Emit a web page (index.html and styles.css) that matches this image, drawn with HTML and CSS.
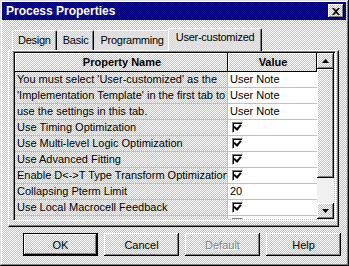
FILE: index.html
```html
<!DOCTYPE html>
<html>
<head>
<meta charset="utf-8">
<link rel="stylesheet" href="styles.css">
</head>
<body>
<div class="window">
  <div class="titlebar">
    <span class="title">Process Properties</span>
    <div class="close bevel"><svg width="8" height="7" viewBox="0 0 8 7"><path d="M0 0h2l2 2 2-2h2L5 3.5 8 7H6L4 5 2 7H0l3-3.5z" fill="#000"/></svg></div>
  </div>
  <div class="tabs">
    <div class="tab">Design</div>
    <div class="tab">Basic</div>
    <div class="tab">Programming</div>
    <div class="tab active">User-customized</div>
  </div>
  <div class="panel">
    <div class="grid">
      <div class="table">
        <div class="row head"><div class="c1">Property Name</div><div class="c2">Value</div></div>
        <div class="row"><div class="c1">You must select 'User-customized' as the</div><div class="c2">User Note</div></div>
        <div class="row"><div class="c1">'Implementation Template' in the first tab to</div><div class="c2">User Note</div></div>
        <div class="row"><div class="c1">use the settings in this tab.</div><div class="c2">User Note</div></div>
        <div class="row"><div class="c1">Use Timing Optimization</div><div class="c2"><span class="chk"></span></div></div>
        <div class="row"><div class="c1">Use Multi-level Logic Optimization</div><div class="c2"><span class="chk"></span></div></div>
        <div class="row"><div class="c1">Use Advanced Fitting</div><div class="c2"><span class="chk"></span></div></div>
        <div class="row"><div class="c1">Enable D&lt;-&gt;T Type Transform Optimization</div><div class="c2"><span class="chk"></span></div></div>
        <div class="row"><div class="c1">Collapsing Pterm Limit</div><div class="c2">20</div></div>
        <div class="row"><div class="c1">Use Local Macrocell Feedback</div><div class="c2"><span class="chk"></span></div></div>
        <div class="row"><div class="c1">Use Local Pin Feedback</div><div class="c2"><span class="chk"></span></div></div>
      </div>
      <div class="scrollbar">
        <div class="sbtn bevel"><svg width="7" height="4" viewBox="0 0 7 4"><path d="M3.5 0L7 4H0z" fill="#000"/></svg></div>
        <div class="thumb bevel"></div>
        <div class="track"></div>
        <div class="sbtn bevel"><svg width="7" height="4" viewBox="0 0 7 4"><path d="M0 0h7L3.5 4z" fill="#000"/></svg></div>
      </div>
    </div>
  </div>
  <div class="buttons">
    <div class="btn default">OK</div>
    <div class="btn bevel">Cancel</div>
    <div class="btn bevel disabled">Default</div>
    <div class="btn bevel">Help</div>
  </div>
</div>
</body>
</html>
```

FILE: styles.css
```css
html, body {
  margin: 0;
  padding: 0;
}
body {
  width: 349px;
  height: 266px;
  overflow: hidden;
  font-family: "Liberation Sans", Arial, sans-serif;
  font-size: 11px;
  color: #000;
}
body, .tab, .thumb, .bevel, .btn, .c1 {
  background: repeating-conic-gradient(#c0c0c0 0 25%, #ffffff 0 50%) 0 0 / 2px 2px fixed;
}
.window {
  width: 349px;
  height: 266px;
  box-sizing: border-box;
  padding: 2px 3px 3px 2px;
  display: flex;
  flex-direction: column;
  box-shadow: inset -1px -1px #000, inset 1px 1px #dfdfdf, inset -2px -2px #808080, inset 2px 2px #fff;
}
.titlebar {
  height: 18px;
  flex: none;
  display: flex;
  align-items: center;
  justify-content: space-between;
  padding: 0 2px 0 4px;
  background: repeating-conic-gradient(#0000ff 0 25%, #000080 0 50%) 0 0 / 2px 2px fixed;
  color: #fff;
  font-weight: bold;
  font-size: 12px;
}
.bevel {
  box-shadow: inset -1px -1px #000, inset 1px 1px #fff, inset -2px -2px #808080;
}
.close {
  width: 16px;
  height: 14px;
  display: flex;
  align-items: center;
  justify-content: center;
}
.tabs {
  display: flex;
  align-items: flex-end;
  height: 22px;
  margin-top: 8px;
  padding-left: 10px;
  position: relative;
  z-index: 1;
  letter-spacing: -0.25px;
}
.tab {
  height: 20px;
  box-sizing: border-box;
  padding: 3px 5px 0 5px;
  border-top: 1px solid #fff;
  border-left: 1px solid #fff;
  border-right: 1px solid #000;
  border-radius: 2px 2px 0 0;
  box-shadow: inset -1px 0 #808080;
}
.tab + .tab {
  border-left-color: transparent;
}
.tab.active {
  height: 23px;
  margin: 0 -2px -1px -2px;
  padding: 2px 7px 0 7px;
  border-left-color: #fff;
  position: relative;
}
.panel {
  margin-left: 6px;
  width: 331px;
  height: 177px;
  flex: none;
  box-sizing: border-box;
  border: 1px solid;
  border-color: #fff #000 #000 #fff;
  box-shadow: inset -1px -1px #808080;
  padding: 0 0 0 4px;
}
.grid {
  display: flex;
  width: 323px;
  height: 170px;
  box-sizing: border-box;
  border: 1px solid;
  border-color: #808080 #fff #fff #808080;
  padding: 1px;
  box-shadow: inset 1px 1px #000;
}
.table {
  width: 302px;
  height: 166px;
  overflow: hidden;
  display: flex;
  flex-direction: column;
}
.row {
  display: flex;
  height: 16px;
  flex: none;
  box-sizing: border-box;
  border-bottom: 1px solid #c0c0c0;
  line-height: 15px;
  white-space: nowrap;
}
.c1 {
  width: 213px;
  box-sizing: border-box;
  border-right: 1px solid #c0c0c0;
  padding-left: 2px;
  overflow: hidden;
}
.c2 {
  width: 89px;
  box-sizing: border-box;
  padding-left: 2px;
  background: #fff;
  overflow: hidden;
  display: flex;
  align-items: center;
}
.row.head {
  height: 19px;
  border-bottom: 1px solid #000;
  font-weight: bold;
  line-height: 18px;
}
.row.head .c1, .row.head .c2 {
  justify-content: center;
  text-align: center;
  border-right: 1px solid #000;
  box-shadow: inset 1px 1px #fff;
  background: repeating-conic-gradient(#c0c0c0 0 25%, #ffffff 0 50%) 0 0 / 2px 2px fixed;
}
.chk {
  width: 11px;
  height: 11px;
  box-sizing: border-box;
  margin-left: 2px;
  border: 1px solid;
  border-color: #808080 #fff #fff #808080;
  box-shadow: inset 1px 1px #000;
  background: #fff;
  position: relative;
}
.chk::after {
  content: "";
  position: absolute;
  left: 2px;
  top: 0px;
  width: 3px;
  height: 5px;
  border: solid #000;
  border-width: 0 2px 2px 0;
  transform: rotate(40deg);
}
.scrollbar {
  width: 17px;
  display: flex;
  flex-direction: column;
}
.sbtn {
  height: 16px;
  display: flex;
  align-items: center;
  justify-content: center;
  flex: none;
}
.thumb {
  height: 109px;
  flex: none;
}
.track {
  flex: 1;
  background: #f0f0f0;
}
.buttons {
  display: flex;
  gap: 6px;
  margin-top: 6px;
  padding-left: 21px;
}
.btn {
  width: 75px;
  height: 23px;
  box-sizing: border-box;
  display: flex;
  align-items: center;
  justify-content: center;
}
.btn.default {
  border: 1px solid #000;
  box-shadow: inset -1px -1px #000, inset 1px 1px #fff, inset -2px -2px #808080;
}
.btn.disabled {
  color: #808080;
  text-shadow: 1px 1px #fff;
}
```
